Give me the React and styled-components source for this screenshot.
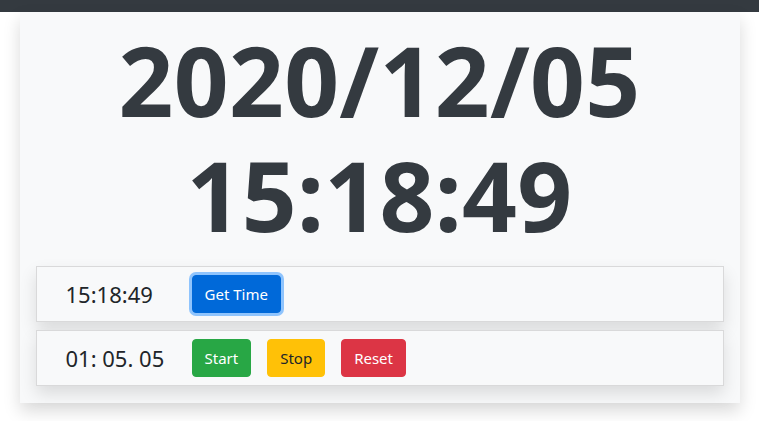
import React from "react";
import styled, { createGlobalStyle } from "styled-components";

const GlobalStyle = createGlobalStyle`
  body {
    margin: 0;
    background: #fff;
    font-family: "Noto Sans", "Open Sans", sans-serif;
    color: #212529;
  }
`;

const TopBar = styled.div`
  height: 12px;
  background-color: #343a40;
`;

const Page = styled.div`
  width: 720px;
  margin: 0 auto;
  padding-bottom: 24px;
`;

const Card = styled.div`
  background-color: #f8f9fa;
  box-shadow: 0 8px 16px rgba(0, 0, 0, 0.15);
  padding: 10px 16px 17px;
`;

const Display = styled.h1`
  margin: 0 0 14px;
  font-size: 96px;
  font-weight: 700;
  line-height: 1.2;
  text-align: center;
  letter-spacing: 0.3px;
  color: #343a40;
`;

const Row = styled.div`
  display: flex;
  align-items: center;
  gap: 16px;
  height: 56px;
  box-sizing: border-box;
  padding: 0 29px;
  background-color: #f8f9fa;
  border: 1px solid rgba(0, 0, 0, 0.125);
  box-shadow: 0 8px 16px rgba(0, 0, 0, 0.12);
  & + & {
    margin-top: 8px;
  }
`;

const Readout = styled.span`
  width: 110px;
  font-size: 22px;
  line-height: 1;
  color: #212529;
`;

const colors = {
  primary: { bg: "#0069d9", fg: "#fff" },
  success: { bg: "#28a745", fg: "#fff" },
  warning: { bg: "#ffc107", fg: "#212529" },
  danger: { bg: "#dc3545", fg: "#fff" },
};

const Button = styled.button`
  height: 38px;
  padding: 0 12px;
  border: 1px solid ${(p) => colors[p.$variant].bg};
  border-radius: 4px;
  background-color: ${(p) => colors[p.$variant].bg};
  color: ${(p) => colors[p.$variant].fg};
  font-family: "Noto Sans", "Open Sans", sans-serif;
  font-size: 15px;
  line-height: 1;
  box-shadow: ${(p) => (p.$focus ? "0 0 0 3px rgba(38, 143, 255, 0.5)" : "none")};
  cursor: pointer;
`;

export default function App() {
  return (
    <>
      <GlobalStyle />
      <TopBar />
      <Page>
        <Card>
          <Display>
            2020/12/05
            <br />
            15:18:49
          </Display>
          <Row>
            <Readout>15:18:49</Readout>
            <Button $variant="primary" $focus>
              Get Time
            </Button>
          </Row>
          <Row>
            <Readout>01: 05. 05</Readout>
            <Button $variant="success">Start</Button>
            <Button $variant="warning">Stop</Button>
            <Button $variant="danger">Reset</Button>
          </Row>
        </Card>
      </Page>
    </>
  );
}
